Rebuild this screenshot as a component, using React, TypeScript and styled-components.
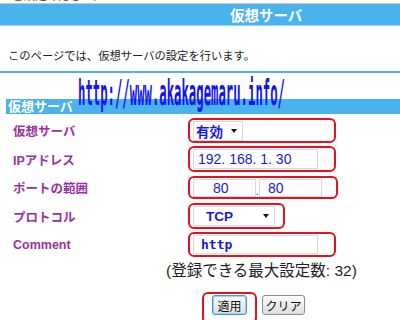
import * as React from "react";
import styled, { createGlobalStyle } from "styled-components";

const Global = createGlobalStyle`
  html, body {
    margin: 0;
    padding: 0;
    background: #fff;
  }
  body {
    width: 400px;
    height: 320px;
    overflow: hidden;
    font-family: "Liberation Sans", "Noto Sans CJK JP", sans-serif;
  }
`;

const BLUE_BAR = "#4ab2ec";
const FIELD_BLUE = "#1818e0";

const Page = styled.div`
  position: relative;
  width: 400px;
  height: 320px;
  overflow: hidden;
`;

const TopCut = styled.div`
  height: 3px;
  overflow: hidden;
  border-bottom: 1px solid #c9c9c9;

  span {
    display: block;
    margin-top: -11px;
    padding-left: 12px;
    font-size: 11.5px;
    line-height: 14px;
    color: #555;
  }
`;

const HeaderBar = styled.div`
  height: 21px;
  background: ${BLUE_BAR};
  border-bottom: 1px solid #92d2f6;
  display: flex;
  align-items: center;
  padding-left: 230px;
  color: #fff;
  font-weight: bold;
  font-size: 14.5px;
`;

const Intro = styled.p`
  margin: 23px 0 0;
  padding-left: 8px;
  font-size: 11.3px;
  line-height: 14px;
  color: #222;
`;

const BlueRule = styled.div`
  margin-top: 8px;
  height: 2px;
  background: ${BLUE_BAR};
`;

const SectionBar = styled.div`
  margin: 26px 0 0 6px;
  height: 15px;
  background: ${BLUE_BAR};
  color: #fff;
  font-weight: bold;
  font-size: 13px;
  line-height: 15px;
  padding-left: 2px;
`;

const Rows = styled.div`
  display: flex;
  flex-direction: column;
  gap: 3.5px;
  padding-top: 4px;
`;

const Row = styled.div`
  display: flex;
  align-items: center;
  height: 25px;
`;

const Label = styled.div`
  width: 188px;
  box-sizing: border-box;
  padding-left: 13px;
  color: #9b30a0;
  font-weight: bold;
  font-size: 12.5px;
`;

const Mark = styled.div<{ $w: number; $h?: number }>`
  width: ${(p) => p.$w}px;
  height: ${(p) => p.$h ?? 25}px;
  box-sizing: border-box;
  border: 2px solid #e8101c;
  border-radius: 6px;
  display: flex;
  align-items: center;
  padding: 0 3px;
`;

const FakeSelect = styled.div<{ $w: number; $indent: number }>`
  width: ${(p) => p.$w}px;
  height: 20px;
  box-sizing: border-box;
  border: 1px solid #d6dce2;
  background: #fff;
  display: flex;
  align-items: center;
  justify-content: space-between;
  padding: 0 5px 0 ${(p) => p.$indent}px;
  color: ${FIELD_BLUE};
  font-weight: bold;
  font-size: 13.5px;
`;

const Arrow = styled.span`
  width: 0;
  height: 0;
  border-left: 3.5px solid transparent;
  border-right: 3.5px solid transparent;
  border-top: 4px solid #111;
`;

const Field = styled.input<{ $w: number; $pl: number; $mono?: boolean }>`
  width: ${(p) => p.$w}px;
  height: ${(p) => (p.$mono ? 19 : 20)}px;
  box-sizing: border-box;
  margin: 0;
  border: 1px solid #d6dce2;
  background: #fff;
  padding: 0 0 0 ${(p) => p.$pl}px;
  color: ${FIELD_BLUE};
  font-family: ${(p) =>
    p.$mono ? `"DejaVu Sans Mono", monospace` : `"Liberation Sans", sans-serif`};
  font-weight: ${(p) => (p.$mono ? "bold" : "normal")};
  font-size: ${(p) => (p.$mono ? 13 : 14)}px;
  outline: none;
`;

const PortField = styled(Field)`
  height: 18px;
`;

const Dot = styled.span`
  width: 3px;
  align-self: flex-end;
  margin-bottom: 1px;
  font-size: 10px;
  line-height: 8px;
  color: #222;
  text-align: center;
`;

const Count = styled.div`
  margin-top: 5px;
  padding-left: 166px;
  font-size: 15.5px;
  line-height: 18px;
  color: #1e1e28;
`;

const Buttons = styled.div`
  margin-top: 12px;
  padding-left: 202px;
  display: flex;
  align-items: flex-start;
`;

const ApplyMark = styled.div`
  width: 55px;
  height: 32px;
  box-sizing: border-box;
  border: 2px solid #e8101c;
  border-radius: 6px;
  padding: 1px 8px;
`;

const Button = styled.button<{ $focus?: boolean; $w: number }>`
  width: ${(p) => p.$w}px;
  height: 20px;
  margin: ${(p) => (p.$focus ? 0 : "3px 0 0 5px")};
  padding: 0;
  box-sizing: border-box;
  border: 1px solid ${(p) => (p.$focus ? "#3a9ad8" : "#8c8c8c")};
  box-shadow: ${(p) => (p.$focus ? "inset 0 0 0 1px #9fd2f2" : "none")};
  border-radius: 3px;
  background: linear-gradient(#fbfbfb, #dedede);
  color: #111;
  font-family: "Liberation Sans", "Noto Sans CJK JP", sans-serif;
  font-size: 12px;
`;

const Watermark = styled.div`
  position: absolute;
  left: 78px;
  top: 75px;
  transform-origin: left top;
  transform: scaleX(0.341);
  white-space: nowrap;
  font-family: "DejaVu Sans Mono", monospace;
  font-weight: bold;
  font-size: 36px;
  line-height: 36px;
  color: #1414f0;
  pointer-events: none;
`;

const App = () => {
  return (
    <Page>
      <Global />
      <TopCut>
        <span>ご設定ください。</span>
      </TopCut>
      <HeaderBar>仮想サーバ</HeaderBar>
      <Intro>このページでは、仮想サーバの設定を行います。</Intro>
      <BlueRule />
      <SectionBar>仮想サーバ</SectionBar>
      <Rows>
        <Row>
          <Label>仮想サーバ</Label>
          <Mark $w={148}>
            <FakeSelect $w={50} $indent={2}>
              有効
              <Arrow />
            </FakeSelect>
          </Mark>
        </Row>
        <Row>
          <Label>IPアドレス</Label>
          <Mark $w={148} $h={26}>
            <Field $w={125} $pl={4} defaultValue="192. 168. 1. 30" readOnly />
          </Mark>
        </Row>
        <Row>
          <Label>ポートの範囲</Label>
          <Mark $w={150} $h={23}>
            <PortField $w={63} $pl={19} defaultValue="80" readOnly />
            <Dot>.</Dot>
            <PortField $w={63} $pl={8} defaultValue="80" readOnly />
          </Mark>
        </Row>
        <Row>
          <Label>プロトコル</Label>
          <Mark $w={97} $h={26}>
            <FakeSelect $w={82} $indent={12}>
              TCP
              <Arrow />
            </FakeSelect>
          </Mark>
        </Row>
        <Row>
          <Label>Comment</Label>
          <Mark $w={148}>
            <Field $w={125} $pl={7} $mono defaultValue="http" readOnly />
          </Mark>
        </Row>
      </Rows>
      <Count>(登録できる最大設定数: 32)</Count>
      <Buttons>
        <ApplyMark>
          <Button $focus $w={35}>
            適用
          </Button>
        </ApplyMark>
        <Button $w={43}>クリア</Button>
      </Buttons>
      <Watermark>http://www.akakagemaru.info/</Watermark>
    </Page>
  );
};

export default App;
